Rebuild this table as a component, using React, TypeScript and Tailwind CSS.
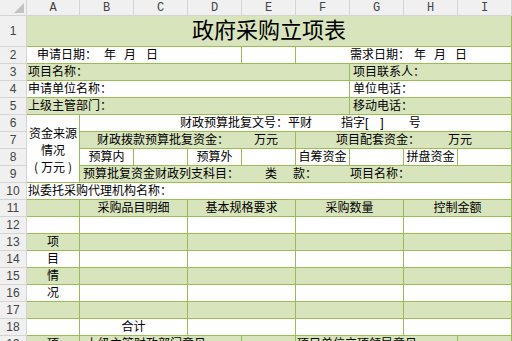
import React from "react";

const cellBase =
  "border-r border-b border-[#9bbb59] flex items-center overflow-hidden whitespace-nowrap text-[12px] leading-none text-black";

function C({ c = "", children }: { c?: string; children?: React.ReactNode }) {
  return <div className={`${cellBase} ${c}`}>{children}</div>;
}

function RH({ n }: { n: number }) {
  return (
    <div className="bg-[#f0f0f0] border-r border-b border-[#d4d4d4] flex items-center justify-center text-[12px] text-[#444] font-['Liberation_Sans',sans-serif]">
      {n}
    </div>
  );
}

function CH({ l }: { l: string }) {
  return (
    <div className="bg-[#f0f0f0] border-r border-b border-[#d4d4d4] flex items-center justify-center text-[12px] text-[#444] font-['Liberation_Mono',monospace]">
      {l}
    </div>
  );
}

export default function App() {
  const G = "bg-[#d8e4bc]";
  const W = "bg-white";
  return (
    <div className="w-[512px] h-[341px] overflow-hidden bg-white font-['Liberation_Sans','Noto_Sans_CJK_SC',sans-serif]">
      <div className="grid grid-cols-[27px_53px_repeat(8,54px)] grid-rows-[16px_31px_repeat(18,17px)]">
        {/* header */}
        <div className="relative bg-[#f0f0f0] border-r border-b border-[#d4d4d4]">
          <svg className="absolute right-[2px] bottom-[2px]" width="10" height="10" viewBox="0 0 10 10">
            <polygon points="10,0 10,10 0,10" fill="#c2c2c2" />
          </svg>
        </div>
        {["A", "B", "C", "D", "E", "F", "G", "H", "I"].map((l) => (
          <CH key={l} l={l} />
        ))}

        {/* row 1 */}
        <RH n={1} />
        <C c={`col-span-9 ${G} justify-center text-[22px]`}>政府采购立项表</C>

        {/* row 2 */}
        <RH n={2} />
        <C c={`col-span-4 ${W} pl-[10px]`}>
          <span>申请日期：</span>
          <span className="ml-[7px]">年</span>
          <span className="ml-[8px]">月</span>
          <span className="ml-[10px]">日</span>
        </C>
        <C c={W} />
        <C c={`col-span-4 ${W} pl-[54px]`}>
          <span>需求日期：</span>
          <span className="ml-[4px]">年</span>
          <span className="ml-[8px]">月</span>
          <span className="ml-[9px]">日</span>
        </C>

        {/* row 3 */}
        <RH n={3} />
        <C c={`col-span-6 ${G} pl-[1px]`}>项目名称：</C>
        <C c={`col-span-3 ${G} pl-[3px]`}>项目联系人：</C>

        {/* row 4 */}
        <RH n={4} />
        <C c={`col-span-6 ${W} pl-[1px]`}>申请单位名称：</C>
        <C c={`col-span-3 ${W} pl-[3px]`}>单位电话：</C>

        {/* row 5 */}
        <RH n={5} />
        <C c={`col-span-6 ${G} pl-[1px]`}>上级主管部门：</C>
        <C c={`col-span-3 ${G} pl-[3px]`}>移动电话：</C>

        {/* row 6 */}
        <RH n={6} />
        <div className={`row-span-4 border-r border-b border-[#9bbb59] ${W} flex flex-col items-center justify-center text-[12px] leading-[17px] pt-[2px] font-['Noto_Sans_CJK_SC',sans-serif]`}>
          <span>资金来源</span>
          <span>情况</span>
          <span className="flex">
            <span className="mr-[3px]">(</span>
            <span>万元</span>
            <span className="ml-[3px]">)</span>
          </span>
        </div>
        <C c={`col-span-8 ${W} pl-[100px]`}>
          <span>财政预算批复文号：平财</span>
          <span className="ml-[29px]">指字[</span>
          <span className="ml-[12px]">]</span>
          <span className="ml-[25px]">号</span>
        </C>

        {/* row 7 */}
        <RH n={7} />
        <C c={`col-span-4 ${G} pl-[17px]`}>
          <span>财政拨款预算批复资金：</span>
          <span className="ml-[25px]">万元</span>
        </C>
        <C c={`col-span-4 ${G} pl-[40px]`}>
          <span>项目配套资金：</span>
          <span className="ml-[28px]">万元</span>
        </C>

        {/* row 8 */}
        <RH n={8} />
        <C c={`${W} justify-center`}>预算内</C>
        <C c={W} />
        <C c={`${W} justify-center`}>预算外</C>
        <C c={W} />
        <C c={`${W} justify-center`}>自筹资金</C>
        <C c={W} />
        <C c={`${W} justify-center`}>拼盘资金</C>
        <C c={W} />

        {/* row 9 */}
        <RH n={9} />
        <C c={`col-span-8 ${G} pl-[3px]`}>
          <span>预算批复资金财政列支科目：</span>
          <span className="ml-[26px]">类</span>
          <span className="ml-[16px]">款：</span>
          <span className="ml-[33px]">项目名称：</span>
        </C>

        {/* row 10 */}
        <RH n={10} />
        <C c={`col-span-9 ${W} pl-[1px]`}>拟委托采购代理机构名称：</C>

        {/* row 11 */}
        <RH n={11} />
        <C c={G} />
        <C c={`col-span-2 ${G} justify-center`}>采购品目明细</C>
        <C c={`col-span-2 ${G} justify-center`}>基本规格要求</C>
        <C c={`col-span-2 ${G} justify-center`}>采购数量</C>
        <C c={`col-span-2 ${G} justify-center`}>控制金额</C>

        {/* rows 12-17 */}
        {[
          { n: 12, bg: W, t: "" },
          { n: 13, bg: G, t: "项" },
          { n: 14, bg: W, t: "目" },
          { n: 15, bg: G, t: "情" },
          { n: 16, bg: W, t: "况" },
          { n: 17, bg: G, t: "" },
        ].map((r) => (
          <React.Fragment key={r.n}>
            <RH n={r.n} />
            <C c={`${r.bg} justify-center`}>{r.t}</C>
            <C c={`col-span-2 ${r.bg}`} />
            <C c={`col-span-2 ${r.bg}`} />
            <C c={`col-span-2 ${r.bg}`} />
            <C c={`col-span-2 ${r.bg}`} />
          </React.Fragment>
        ))}

        {/* row 18 */}
        <RH n={18} />
        <C c={W} />
        <C c={`col-span-2 ${W} justify-center`}>合计</C>
        <C c={`col-span-2 ${W}`} />
        <C c={`col-span-2 ${W}`} />
        <C c={`col-span-2 ${W}`} />

        {/* row 19 */}
        <RH n={19} />
        <C c={`${G} justify-center`}>项</C>
        <C c={`col-span-3 ${G} pl-[6px]`}>上级主管财政部门意见</C>
        <C c={G} />
        <C c={`col-span-3 ${G} pl-[1px]`}>项目单位立项领导意见</C>
        <C c={G} />
      </div>
    </div>
  );
}
